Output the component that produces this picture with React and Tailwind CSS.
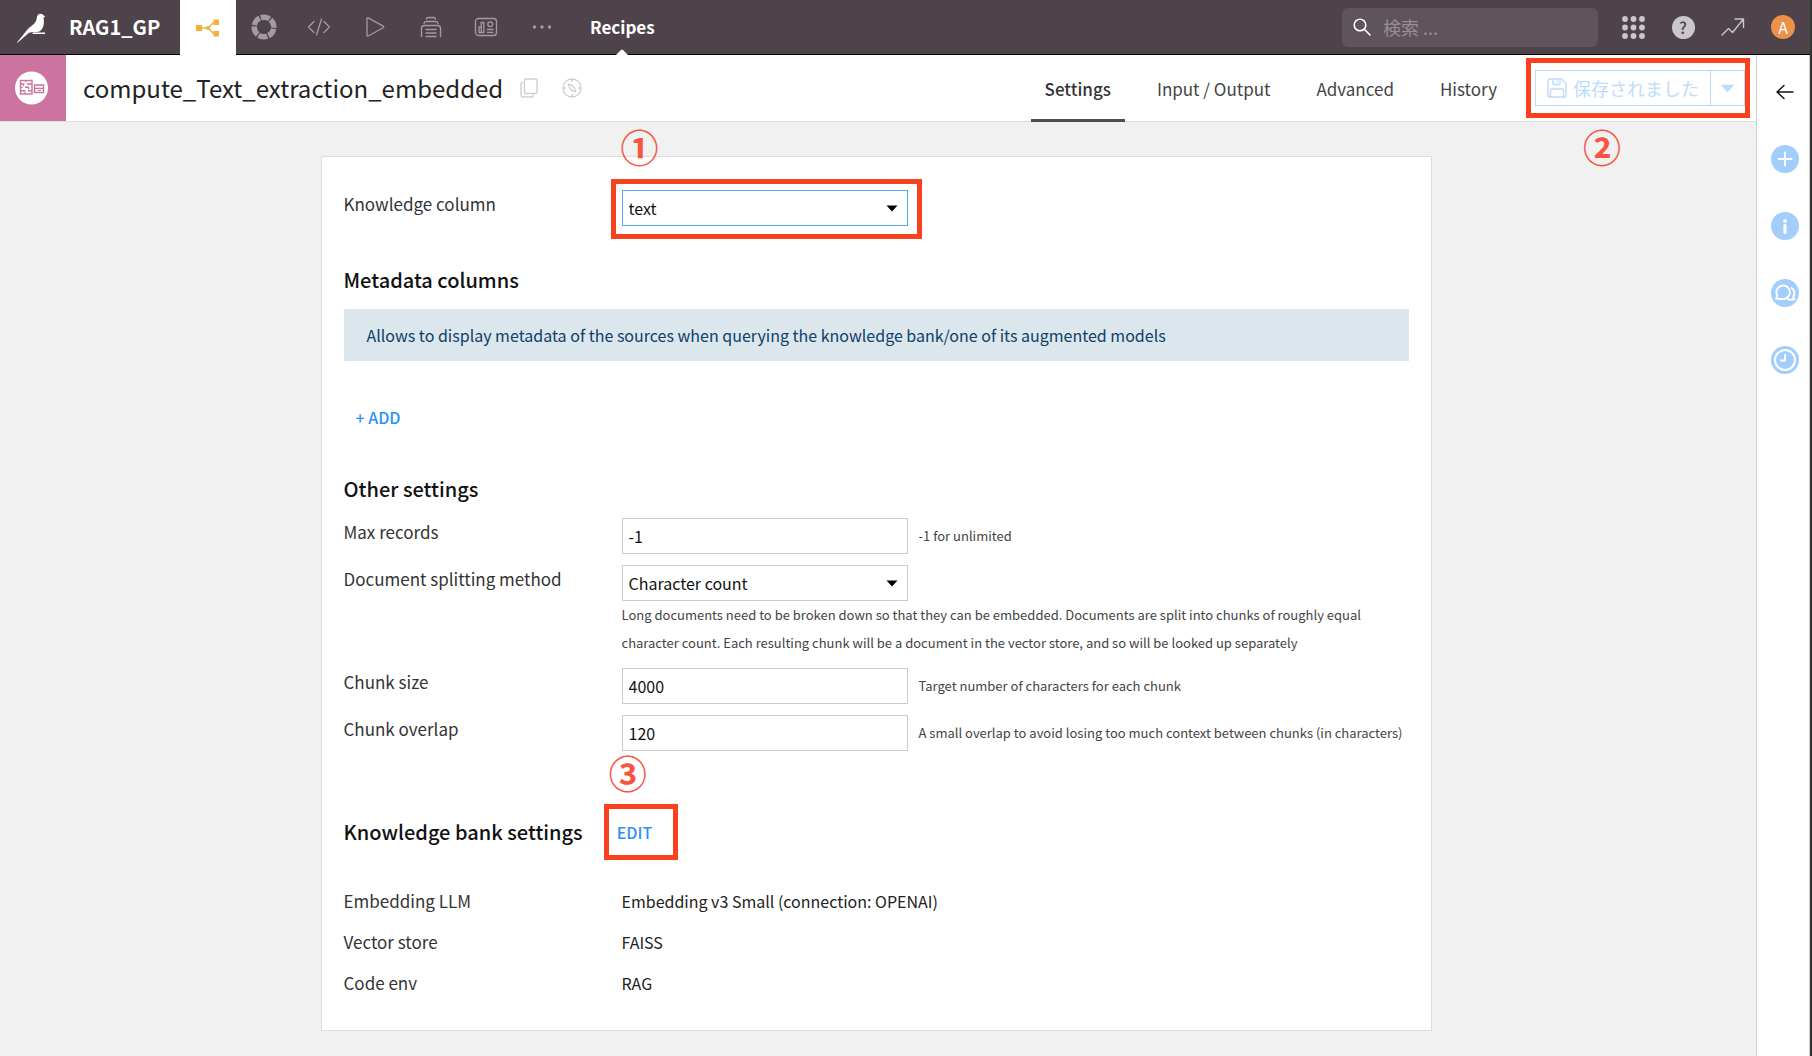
import React, { useState } from 'react';

const NAV_ICONS = [
  { id: 'lab', label: 'Lab', Icon: RingIcon },
  { id: 'code', label: 'Code', Icon: CodeIcon },
  { id: 'jobs', label: 'Jobs', Icon: PlayIcon },
  { id: 'stack', label: 'Deployer', Icon: StackIcon },
  { id: 'dashboards', label: 'Dashboards', Icon: DashboardIcon },
  { id: 'more', label: 'More', Icon: DotsIcon },
];

const TABS = ['Settings', 'Input / Output', 'Advanced', 'History'];

const BANK_SETTINGS = [
  { name: 'Embedding LLM', value: 'Embedding v3 Small (connection: OPENAI)' },
  { name: 'Vector store', value: 'FAISS' },
  { name: 'Code env', value: 'RAG' },
];

function BirdIcon() {
  return (
    <svg width="30" height="31" viewBox="0 0 30 31" fill="#fff">
      <path d="M1 30.500L11.500 17.500C14.500 14 20 12 20.700 6.500c0-4.500 3.500-5.700 6-4l2.500 2.200-1.700.8c1 5.500.3 11.500-4.200 14-3 1.300-7.300.2-10.300 1.200L1.500 30.700z" />
      <path d="M17 20.500h12v1.600H16.500z" />
    </svg>
  );
}

function FlowIcon() {
  return (
    <svg width="24" height="20" viewBox="0 0 24 20" fill="#f2b13c">
      <path d="M6 10h6M12 10l6-6M12 10l6 6" stroke="#f2b13c" strokeWidth="1.500" fill="none" />
      <rect x="0" y="7" width="6" height="6" />
      <circle cx="12" cy="10" r="2" />
      <rect x="17.500" y="1.500" width="5.500" height="5.500" />
      <rect x="17.500" y="13" width="5.500" height="5.500" />
    </svg>
  );
}

function RingIcon() {
  return (
    <svg width="26" height="26" viewBox="0 0 26 26" fill="none" stroke="#a39ba1">
      <circle cx="13" cy="13" r="9.800" strokeWidth="5.400" strokeDasharray="8.960 1.300" transform="rotate(10 13 13)" />
    </svg>
  );
}

function CodeIcon() {
  return (
    <svg width="24" height="20" viewBox="0 0 24 20" fill="none" stroke="#a39ba1" strokeWidth="1.300" strokeLinecap="round" strokeLinejoin="round">
      <path d="M7 4.500L1.500 10 7 15.500M17 4.500l5.500 5.500-5.500 5.500M14.500 2l-5 16" />
    </svg>
  );
}

function PlayIcon() {
  return (
    <svg width="20" height="20" viewBox="0 0 20 20" fill="none" stroke="#a39ba1" strokeWidth="1.300" strokeLinejoin="round">
      <path d="M2 1.500c0-.600.600-.900 1.200-.600l15 8.200c.700.400.700 1.300 0 1.700l-15 8.200c-.600.300-1.200 0-1.200-.600z" />
    </svg>
  );
}

function StackIcon() {
  return (
    <svg width="22" height="22" viewBox="0 0 22 22" fill="none" stroke="#a39ba1" strokeWidth="1.400" strokeLinecap="round">
      <path d="M6.500 3c.2-1 .8-1.500 1.800-1.500h5.400c1 0 1.600.5 1.800 1.500M4 7.500C4.200 6.200 5 5.500 6.300 5.500h9.400c1.300 0 2.100.7 2.300 2M1.500 20.500v-8c0-2 1-3 3-3h13c2 0 3 1 3 3v8M6 13.500h10M6 17h10M6 20.500h10" />
    </svg>
  );
}

function DashboardIcon() {
  return (
    <svg width="24" height="20" viewBox="0 0 24 20" fill="none" stroke="#a39ba1" strokeWidth="1.300">
      <rect x="1.500" y="1.500" width="21" height="17" rx="3" />
      <path d="M5 15.500V10h2.300v5.500zM7.300 15.500V5.500h2.500v10zM13 12.500h6.500M13 15.300h6.500" />
      <circle cx="16.200" cy="7.300" r="2.400" />
    </svg>
  );
}

function DotsIcon() {
  return (
    <svg width="20" height="6" viewBox="0 0 20 6" fill="#a39ba1">
      <circle cx="2.500" cy="3" r="1.700" />
      <circle cx="10" cy="3" r="1.700" />
      <circle cx="17.500" cy="3" r="1.700" />
    </svg>
  );
}

function RecipeIcon() {
  return (
    <svg width="34" height="34" viewBox="0 0 34 34" fill="none" stroke="#cd73a0">
      <circle cx="17.500" cy="17" r="16.500" fill="#fff" stroke="none" />
      <rect x="6.500" y="9.500" width="11.500" height="13.500" strokeWidth="1.400" />
      <path d="M6.500 13h4M13 13h5M6.500 16.300h2M11 16.300h4M6.500 19.700h5M14 19.700h4" strokeWidth="1.500" />
      <path d="M12 9.500v2M9.500 13v2M14.500 16.300v2M11 21v2" strokeWidth="1.200" />
      <rect x="20.500" y="14" width="9" height="7.500" strokeWidth="1.500" />
      <path d="M20.500 17.300h9M23.500 19.500h3.500" strokeWidth="1.200" />
    </svg>
  );
}

function CopyIcon() {
  return (
    <svg width="18" height="20" viewBox="0 0 18 20" fill="none" stroke="#cfcfcf" strokeWidth="1.400" strokeLinejoin="round" strokeLinecap="round">
      <rect x="4.500" y="1" width="12.500" height="14.500" rx="1.500" />
      <path d="M2.500 4.500C1.500 4.500 1 5 1 6v11c0 1.200.8 2 2 2h8.500c1 0 1.800-.5 1.800-1.500" />
    </svg>
  );
}

function CompassIcon() {
  return (
    <svg width="20" height="20" viewBox="0 0 20 20" fill="none" stroke="#cfcfcf" strokeWidth="1.300">
      <circle cx="10" cy="10" r="9" />
      <path d="M10 1v3M10 16v3M1 10h3M16 10h3" />
      <path d="M6.300 6.300c1.800-.2 3.500.9 4.600 2s2.500 3.200 2.800 5.400c-2 .1-3.700-1-4.800-2.200S6.500 8.500 6.300 6.300z" />
    </svg>
  );
}

function SearchIcon() {
  return (
    <svg width="18" height="18" viewBox="0 0 18 18" fill="none" stroke="#fff" strokeWidth="1.600" strokeLinecap="round">
      <circle cx="7" cy="7" r="5.800" />
      <path d="M11.300 11.300L17 17" />
    </svg>
  );
}

function AppsIcon() {
  const at = [3, 11.500, 20];
  return (
    <svg width="23" height="23" viewBox="0 0 23 23" fill="#cac6c9">
      {at.map(y => at.map(x => <circle key={`${x}-${y}`} cx={x} cy={y} r="2.900" />))}
    </svg>
  );
}

function TrendIcon() {
  return (
    <svg width="24" height="20" viewBox="0 0 24 20" fill="none" stroke="#cac6c9" strokeWidth="1.400" strokeLinejoin="round" strokeLinecap="round">
      <path d="M1 18l6.500-6.500 4 4L22.500 2M14 2h8.500v8.500" />
    </svg>
  );
}

function SaveIcon() {
  return (
    <svg width="20" height="20" viewBox="0 0 20 20" fill="none" stroke="#bcdcfb" strokeWidth="1.400" strokeLinejoin="round">
      <path d="M2.500 1h12L19 5.500v12c0 1-.5 1.500-1.500 1.500h-15C1.500 19 1 18.500 1 17.500v-15C1 1.500 1.500 1 2.500 1z" />
      <path d="M6 1v4.500c0 .6.300 1 1 1h5c.7 0 1-.4 1-1V1M10.500 2.500v2M3.500 19v-6.500c0-1 .5-1.500 1.500-1.500h10c1 0 1.500.5 1.500 1.500V19" />
    </svg>
  );
}

function BackIcon() {
  return (
    <svg width="18" height="16" viewBox="0 0 18 16" fill="none" stroke="#111" strokeWidth="1.400" strokeLinecap="round" strokeLinejoin="round">
      <path d="M17 8H1M8 1.500L1 8l7 6.500" />
    </svg>
  );
}

function PlusIcon() {
  return (
    <svg width="28" height="28" viewBox="0 0 28 28">
      <circle cx="14" cy="14" r="14" fill="#a3cdfb" />
      <path d="M14 7.500v13M7.500 14h13" stroke="#fff" strokeWidth="2" strokeLinecap="round" />
    </svg>
  );
}

function InfoIcon() {
  return (
    <svg width="28" height="28" viewBox="0 0 28 28">
      <circle cx="14" cy="14" r="14" fill="#a3cdfb" />
      <circle cx="14" cy="9" r="1.900" fill="#fff" />
      <path d="M14 13.500v7" stroke="#fff" strokeWidth="3.200" strokeLinecap="round" />
    </svg>
  );
}

function ChatIcon() {
  return (
    <svg width="28" height="28" viewBox="0 0 28 28" fill="none" stroke="#fff" strokeWidth="1.900" strokeLinejoin="round">
      <circle cx="14" cy="14" r="14" fill="#a3cdfb" stroke="none" />
      <path d="M11.500 6.500a6.800 6.800 0 1 1-1.300 13.300c-1.500.3-3.200.2-5.200-.3 1-.8 1.500-1.700 1.500-2.500A6.800 6.800 0 0 1 11.500 6.500z" />
      <path d="M20 8.500c3.500 2 4.300 6.300 2.300 9.300 0 1 .4 1.800 1.200 2.500-3 .7-5.500.600-7.500-.3" />
    </svg>
  );
}

function ClockIcon() {
  return (
    <svg width="28" height="28" viewBox="0 0 28 28" fill="none" stroke="#fff">
      <circle cx="14" cy="14" r="14" fill="#a3cdfb" stroke="none" />
      <circle cx="14" cy="14" r="10" strokeWidth="2" />
      <path d="M14 8v6.500H9" strokeWidth="2" />
    </svg>
  );
}

function Caret({ className }) {
  return (
    <svg className={className} viewBox="0 0 12 7" fill="currentColor">
      <path d="M.5.5h11L6 6.500z" />
    </svg>
  );
}

function Step({ children, className }) {
  return (
    <span className={`absolute text-[38px] leading-9 font-bold text-[#f9543f] ${className}`}>{children}</span>
  );
}

function Row({ id, label, children }) {
  return (
    <div className="flex items-start">
      <label htmlFor={id} className="w-[278px] shrink-0 text-[17px] leading-7 text-[#333]">{label}</label>
      <div className="min-w-0 flex-1">{children}</div>
    </div>
  );
}

function SelectBox({ id, value, onChange, options, className }) {
  return (
    <div className="relative w-[286px]">
      <select
        id={id}
        value={value}
        onChange={e => onChange(e.target.value)}
        className={`block h-9 w-full appearance-none border bg-white px-1.5 text-base leading-6 text-[#111] outline-none ${className}`}
      >
        {options.map(o => <option key={o}>{o}</option>)}
      </select>
      <Caret className="pointer-events-none absolute top-[15px] right-[10px] h-[7px] w-3 text-black" />
    </div>
  );
}

function NumberField({ id, value, onChange, hint }) {
  return (
    <div className="flex items-center gap-[11px]">
      <input
        id={id}
        type="text"
        value={value}
        onChange={e => onChange(e.target.value)}
        className="h-9 w-[286px] shrink-0 border border-[#ccc] bg-white px-1.5 text-base leading-6 text-[#111] outline-none"
      />
      <span className="text-[13px] leading-7 text-[#444]">{hint}</span>
    </div>
  );
}

function TopBar() {
  return (
    <header className="flex h-[55px] shrink-0 items-stretch border-b border-black bg-[#4f434b] text-white">
      <div className="flex w-[180px] items-center gap-[23px] pl-4">
        <a href="#home" aria-label="Home"><BirdIcon /></a>
        <a href="#project" className="text-xl leading-7 font-bold">RAG1_GP</a>
      </div>
      <a href="#flow" aria-label="Flow" className="-mb-px flex w-14 items-center justify-center bg-white"><FlowIcon /></a>
      <nav className="grid w-[334px] grid-cols-6">
        {NAV_ICONS.map(({ id, label, Icon }) => (
          <a key={id} href={`#${id}`} aria-label={label} className="flex items-center justify-center"><Icon /></a>
        ))}
      </nav>
      <a href="#recipes" className="relative flex items-center px-5 text-[17px] leading-7 font-bold">
        Recipes
        <svg className="absolute -bottom-px left-1/2 -ml-1.5" width="12" height="6" viewBox="0 0 12 6" fill="#fff">
          <path d="M0 6l5-5q1-1 2 0l5 5z" />
        </svg>
      </a>
      <div className="ml-auto flex items-center pr-0.5">
        <label className="mr-2.5 flex h-[39px] w-64 items-center gap-3 rounded-md bg-[#60545c] px-[11px]">
          <SearchIcon />
          <input type="text" aria-label="検索" placeholder="検索 ..." className="min-w-0 flex-1 bg-transparent text-lg leading-7 outline-none placeholder:text-[#978e94]" />
        </label>
        <button aria-label="Apps" className="flex w-[50px] justify-center"><AppsIcon /></button>
        <button aria-label="Help" className="flex w-[50px] justify-center">
          <span className="flex size-[23px] items-center justify-center rounded-full bg-[#cac6c9] text-base leading-6 font-medium text-[#4f434b]">?</span>
        </button>
        <button aria-label="Activity" className="flex w-[50px] justify-center"><TrendIcon /></button>
        <button aria-label="Account" className="flex w-[50px] justify-center">
          <span className="flex size-6 items-center justify-center rounded-full bg-[#ec914a] text-base leading-6">A</span>
        </button>
      </div>
    </header>
  );
}

function TitleBar({ activeTab, setActiveTab }) {
  return (
    <div className="flex h-[67px] items-stretch border-b border-[#ddd] bg-white">
      <div className="flex w-[66px] items-center bg-[#cd73a0] pl-[14px]"><RecipeIcon /></div>
      <h1 className="flex items-center pl-[17px] text-2xl leading-8 text-[#222]">compute_Text_extraction_embedded</h1>
      <div className="flex items-center gap-6 pl-[17px]">
        <button aria-label="Copy"><CopyIcon /></button>
        <button aria-label="Navigate"><CompassIcon /></button>
      </div>
      <div className="-mb-px ml-auto flex gap-[18px]" role="tablist">
        {TABS.map(tab => (
          <button
            key={tab}
            role="tab"
            aria-selected={activeTab === tab}
            onClick={() => setActiveTab(tab)}
            className={`border-b-3 px-[14px] pt-[3px] text-[17px] leading-6 ${activeTab === tab
              ? 'border-[#4f4f4f] font-medium text-[#333]'
              : 'border-transparent text-[#444]'
            }`}
          >
            {tab}
          </button>
        ))}
      </div>
      <div className="relative ml-6 flex items-center pr-[11px]">
        <div className="flex h-9 border border-[#b9dafb] text-[#bcdcfb]">
          <button className="flex items-center gap-1.5 px-[11px] text-lg leading-7"><SaveIcon />保存されました</button>
          <button aria-label="More save options" className="flex w-[34px] items-center justify-center border-l border-[#b9dafb]">
            <Caret className="h-[9px] w-[15px]" />
          </button>
        </div>
        <div className="pointer-events-none absolute inset-y-[3px] right-1.5 -left-[9px] border-5 border-[#f8411f]" />
        <Step className="top-[73px] left-12">②</Step>
      </div>
    </div>
  );
}

function SideBar() {
  return (
    <aside className="flex w-[54px] shrink-0 flex-col items-center border-x border-[#ccc] bg-white pt-[29px] pl-[3px]">
      <button aria-label="Collapse panel" className="mb-[45px]"><BackIcon /></button>
      <div className="flex flex-col gap-[39px]">
        <button aria-label="Add"><PlusIcon /></button>
        <button aria-label="Details"><InfoIcon /></button>
        <button aria-label="Discussions"><ChatIcon /></button>
        <button aria-label="History"><ClockIcon /></button>
      </div>
    </aside>
  );
}

function SettingsCard() {
  const [column, setColumn] = useState('text');
  const [maxRecords, setMaxRecords] = useState('-1');
  const [method, setMethod] = useState('Character count');
  const [chunkSize, setChunkSize] = useState('4000');
  const [overlap, setOverlap] = useState('120');

  return (
    <section className="mx-auto max-w-[1111px] border border-[#ddd] bg-white px-[22px] pt-[33px] pb-[33px]">
      <Row id="knowledge-column" label="Knowledge column">
        <div className="relative w-[286px]">
          <SelectBox id="knowledge-column" value={column} onChange={setColumn} options={['text']} className="border-[#5aa9f5]" />
          <div className="pointer-events-none absolute -top-[11px] -right-[14px] -bottom-[13px] -left-[11px] border-5 border-[#f8411f]" />
          <Step className="-top-[62px] -left-px">①</Step>
        </div>
      </Row>

      <h2 className="mt-10 text-xl leading-7 font-medium text-[#111]">Metadata columns</h2>
      <p className="mt-[15px] bg-[#dbe6ed] px-[23px] py-3 text-base leading-7 text-[#0f3e68]">
        Allows to display metadata of the sources when querying the knowledge bank/one of its augmented models
      </p>
      <button className="mt-11 block px-3 text-base leading-6 font-medium text-[#2e90f5]">+ ADD</button>

      <h2 className="mt-[46px] text-xl leading-7 font-medium text-[#111]">Other settings</h2>
      <div className="mt-[15px] flex flex-col gap-[11px]">
        <Row id="max-records" label="Max records">
          <NumberField id="max-records" value={maxRecords} onChange={setMaxRecords} hint="-1 for unlimited" />
        </Row>
        <Row id="splitting" label="Document splitting method">
          <SelectBox id="splitting" value={method} onChange={setMethod} options={['Character count']} className="border-[#ccc]" />
          <p className="max-w-[750px] text-[13px] leading-7 text-[#444]">
            Long documents need to be broken down so that they can be embedded. Documents are split into chunks of roughly equal character count. Each resulting chunk will be a document in the vector store, and so will be looked up separately
          </p>
        </Row>
        <Row id="chunk-size" label="Chunk size">
          <NumberField id="chunk-size" value={chunkSize} onChange={setChunkSize} hint="Target number of characters for each chunk" />
        </Row>
        <Row id="chunk-overlap" label="Chunk overlap">
          <NumberField id="chunk-overlap" value={overlap} onChange={setOverlap} hint="A small overlap to avoid losing too much context between chunks (in characters)" />
        </Row>
      </div>

      <div className="mt-[67px] flex items-center gap-[34px]">
        <h2 className="text-xl leading-7 font-medium text-[#111]">Knowledge bank settings</h2>
        <div className="relative">
          <button className="block text-base leading-6 font-medium text-[#2e90f5]">EDIT</button>
          <div className="pointer-events-none absolute -inset-y-4 -right-[26px] -left-[13px] border-5 border-[#f8411f]" />
          <Step className="-top-[66px] -left-2">③</Step>
        </div>
      </div>
      <dl className="mt-[41px] flex flex-col gap-[13px]">
        {BANK_SETTINGS.map(({ name, value }) => (
          <div key={name} className="flex">
            <dt className="w-[278px] shrink-0 text-[17px] leading-7 text-[#333]">{name}</dt>
            <dd className="text-base leading-7 text-[#222]">{value}</dd>
          </div>
        ))}
      </dl>
    </section>
  );
}

export default function App() {
  const [activeTab, setActiveTab] = useState('Settings');

  return (
    <div className="flex min-h-screen flex-col border-r-2 border-[#333] bg-[#f1f1f1] font-['Noto_Sans_CJK_JP',sans-serif]">
      <TopBar />
      <div className="flex flex-1 items-stretch">
        <main className="min-w-0 flex-1">
          <TitleBar activeTab={activeTab} setActiveTab={setActiveTab} />
          <div className="pt-[34px] pr-7 pb-6 pl-6">
            <SettingsCard />
          </div>
        </main>
        <SideBar />
      </div>
    </div>
  );
}
